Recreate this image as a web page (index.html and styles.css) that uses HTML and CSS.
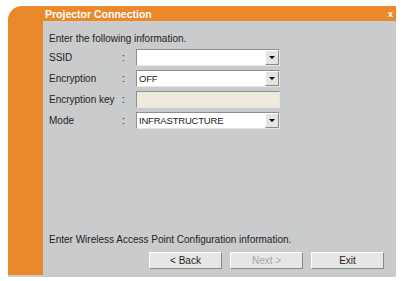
FILE: index.html
```html
<!DOCTYPE html>
<html>
<head>
<meta charset="utf-8">
<link rel="stylesheet" href="styles.css">
</head>
<body>
<div class="window">
  <div class="side"></div>
  <div class="titlebar">
    <span class="title">Projector Connection</span>
    <span class="close">x</span>
  </div>
  <div class="panel">
    <div class="intro">Enter the following information.</div>
    <div class="form">
      <div class="label">SSID</div><div class="colon">:</div>
      <div class="field"><span class="value"></span><span class="drop"><span class="arrow"></span></span></div>
      <div class="label">Encryption</div><div class="colon">:</div>
      <div class="field"><span class="value">OFF</span><span class="drop"><span class="arrow"></span></span></div>
      <div class="label">Encryption key</div><div class="colon">:</div>
      <div class="field disabled"><span class="value"></span></div>
      <div class="label">Mode</div><div class="colon">:</div>
      <div class="field"><span class="value">INFRASTRUCTURE</span><span class="drop"><span class="arrow"></span></span></div>
    </div>
    <div class="spacer"></div>
    <div class="hint">Enter Wireless Access Point Configuration information.</div>
    <div class="buttons">
      <div class="btn">&lt; Back</div>
      <div class="btn off">Next &gt;</div>
      <div class="btn">Exit</div>
    </div>
  </div>
</div>
</body>
</html>
```

FILE: styles.css
```css
html, body {
  margin: 0;
  padding: 0;
  background: #ffffff;
}
body {
  font-family: "Liberation Sans", Arial, sans-serif;
  font-size: 10px;
  color: #222222;
}
.window {
  margin: 6px 0 0 8px;
  width: 388px;
  height: 269px;
  display: grid;
  grid-template-columns: 35px 1fr;
  grid-template-rows: 15px 1fr;
  background: #ea882c;
  border-top-left-radius: 14px;
  border-bottom: 2px solid #c9cbcc;
}
.side {
  grid-column: 1;
  grid-row: 1 / 3;
}
.titlebar {
  grid-column: 2;
  grid-row: 1;
  display: flex;
  align-items: center;
  justify-content: space-between;
  padding: 0 3px 0 2px;
  color: #fff;
  font-weight: bold;
}
.title {
  font-size: 10.5px;
}
.close {
  font-size: 9px;
}
.panel {
  grid-column: 2;
  grid-row: 2;
  background: #c9cbcc;
  display: flex;
  flex-direction: column;
  padding: 12px 12px 6px 6px;
}
.intro {
  line-height: 12px;
}
.form {
  margin-top: 4px;
  display: grid;
  grid-template-columns: 73px 14px 144px;
  row-gap: 4px;
  align-items: center;
}
.field {
  height: 17px;
  box-sizing: border-box;
  background: #fff;
  border: 1px solid;
  border-color: #8e8f90 #e6e6e6 #e6e6e6 #8e8f90;
  display: flex;
  align-items: stretch;
  font-size: 9.5px;
}
.field.disabled {
  background: #eeebdd;
}
.value {
  flex: 1;
  display: flex;
  align-items: center;
  padding-left: 2px;
  letter-spacing: -0.2px;
}
.drop {
  width: 14px;
  background: #e4e4e2;
  border-left: 1px solid #fff;
  border-top: 1px solid #fff;
  border-right: 1px solid #8a8a8a;
  border-bottom: 1px solid #8a8a8a;
  display: flex;
  align-items: center;
  justify-content: center;
  box-sizing: border-box;
}
.arrow {
  width: 0;
  height: 0;
  border-left: 3px solid transparent;
  border-right: 3px solid transparent;
  border-top: 3px solid #000;
}
.spacer {
  flex: 1;
}
.hint {
  line-height: 12px;
}
.buttons {
  margin-top: 6px;
  display: flex;
  justify-content: flex-end;
  gap: 8px;
}
.btn {
  width: 73px;
  height: 17px;
  box-sizing: border-box;
  background: #e6e6e4;
  border: 1px solid;
  border-color: #ffffff #8a8a8a #8a8a8a #ffffff;
  display: flex;
  align-items: center;
  justify-content: center;
  font-size: 10px;
}
.btn.off {
  color: #a8a8a8;
}
```
